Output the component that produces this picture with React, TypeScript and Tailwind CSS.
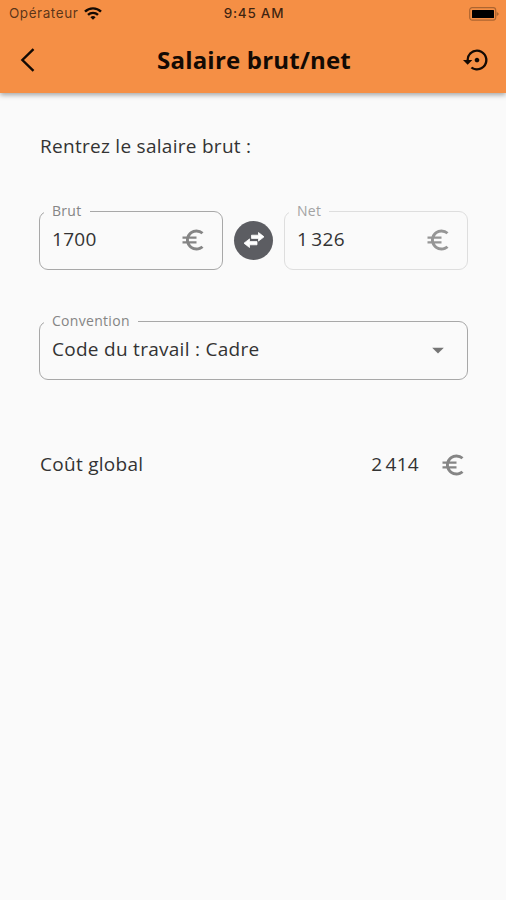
import type { ReactNode } from "react";
import { MdArrowDropDown, MdEuroSymbol, MdSettingsBackupRestore } from "react-icons/md";

function StatusBar() {
  return (
    <div className="grid h-[26px] grid-cols-3 items-center pl-[9px] pr-[7px] pt-px font-['Inter',sans-serif] text-[13.5px]">
      <div className="flex items-center gap-[6px] text-black/65">
        <span className="tracking-[0.55px]">Opérateur</span>
        <svg width="18" height="13" viewBox="0 0 18 13" fill="none" stroke="#130a04" strokeWidth="2.4">
          <path d="M1 4.7a11.4 11.4 0 0 1 16 0" />
          <path d="M4 7.9a7.2 7.2 0 0 1 10 0" />
          <path d="M9 12.8 6.4 10.2a3.8 3.8 0 0 1 5.2 0z" fill="#130a04" stroke="none" />
        </svg>
      </div>
      <span className="text-center font-medium tracking-[0.75px] text-black/75">9:45 AM</span>
      <svg className="justify-self-end" width="30" height="14" viewBox="0 0 30 14">
        <rect x="0.7" y="0.7" width="26" height="12.4" rx="2.5" fill="none" stroke="#ad6530" strokeWidth="1.2" />
        <rect x="3" y="3" width="22" height="8" rx="0.5" fill="#000" />
        <path d="M27.6 4.5 30 7l-2.4 2.5z" fill="#ad6530" />
      </svg>
    </div>
  );
}

function Field({ label, disabled, children }: { label: string; disabled?: boolean; children: ReactNode }) {
  return (
    <fieldset className={`h-[69px] min-w-0 flex-1 rounded-[9px] border ${disabled ? "border-[#dedede]" : "border-[#a8a8a8]"}`}>
      <legend className={`ml-[4px] h-[20px] px-[8px] text-[14px] leading-[20px] tracking-[0.3px] ${disabled ? "text-[#a3a3a3]" : "text-[#858585]"}`}>{label}</legend>
      <div className="flex h-[37px] items-center justify-between pl-[12px] pr-[15px] text-[19px]">{children}</div>
    </fieldset>
  );
}

export default function App() {
  return (
    <div className="min-h-[900px] w-full bg-[#fafafa] font-['Open_Sans',sans-serif] text-[#333]">
      <header className="h-[93px] bg-[#f58f45] text-[#130a04] shadow-[0_2px_5px_rgba(0,0,0,0.35)]">
        <StatusBar />
        <div className="flex h-[67px] items-center justify-between pl-[20px] pr-[15px]">
          <button aria-label="Retour" className="w-[28px]">
            <svg width="15" height="24" viewBox="0 0 15 24" fill="none" stroke="currentColor" strokeWidth="2.4">
              <path d="M13.5 1.2 2.4 12l11.1 10.8" />
            </svg>
          </button>
          <h1 className="-ml-[3px] text-[24px] font-bold tracking-[0.2px]">Salaire brut/net</h1>
          <button aria-label="Réinitialiser">
            <MdSettingsBackupRestore size={28} />
          </button>
        </div>
      </header>

      <main className="pl-[39px] pr-[38px] pt-[38px] text-[19px] tracking-[0.28px]">
        <p className="h-[30px] pl-px leading-[30px]">Rentrez le salaire brut :</p>

        <div className="mt-[40px] flex items-center">
          <Field label="Brut">
            <span>1700</span>
            <MdEuroSymbol size={28} color="#858585" />
          </Field>
          <button aria-label="Inverser" className="mx-[11px] mt-[9px] flex size-[39px] items-center justify-center rounded-full bg-[#5c5d62]">
            <svg width="24" height="18" viewBox="0 0 24 18" fill="#fff" stroke="#fff" strokeWidth="0.8" strokeLinejoin="round">
              <path d="M9.5 4.2h7V1.5L22 5.8l-5.5 4.3V7.4h-7zM15 10.6H7.5V7.9L2 12.2l5.5 4.3v-2.7H15z" />
            </svg>
          </button>
          <Field label="Net" disabled>
            <span className="[word-spacing:-2px]">1 326</span>
            <MdEuroSymbol size={28} color="#969696" />
          </Field>
        </div>

        <div className="mt-[41px] flex">
          <Field label="Convention">
            <span>Code du travail : Cadre</span>
            <MdArrowDropDown size={28} color="#757575" />
          </Field>
        </div>

        <div className="mt-[69px] flex h-[31px] items-center">
          <span className="flex-1 pl-px">Coût global</span>
          <span className="[word-spacing:-2px]">2 414</span>
          <MdEuroSymbol className="ml-[20px] mr-px" size={28} color="#858585" />
        </div>
      </main>
    </div>
  );
}
